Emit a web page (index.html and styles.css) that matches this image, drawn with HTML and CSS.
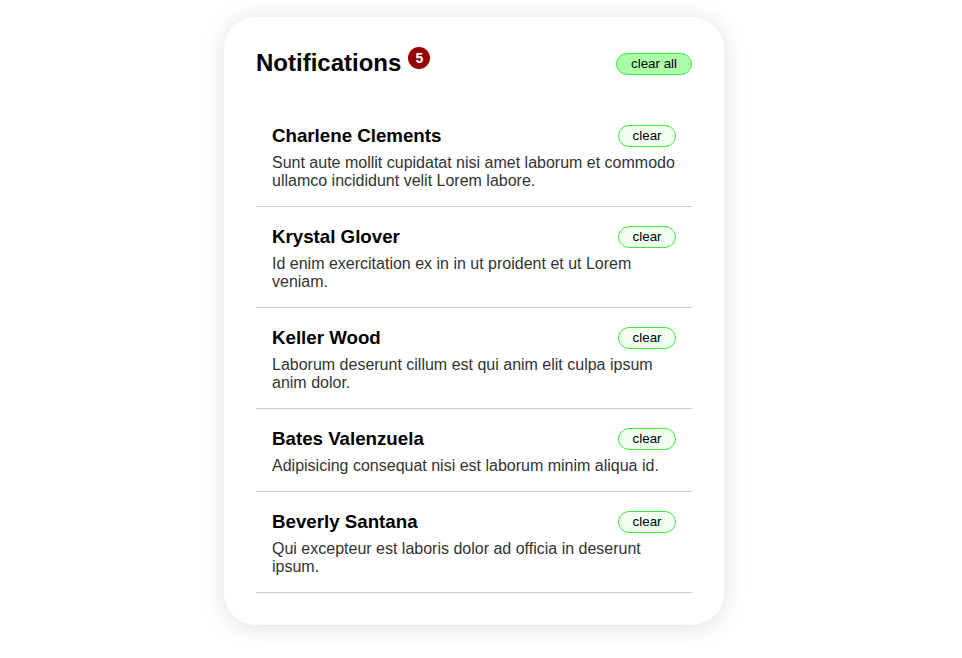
FILE: index.html
```html
<!DOCTYPE html>
<html lang="en">
<head>
<meta charset="utf-8">
<title>Notifications</title>
<link rel="stylesheet" href="styles.css">
</head>
<body>
<main class="page">
  <section class="card">
    <header class="card-header">
      <div class="title-wrap">
        <h2 class="title">Notifications</h2>
        <span class="badge">5</span>
      </div>
      <button class="btn btn-all">clear all</button>
    </header>
    <ul class="list">
      <li class="item">
        <div class="item-head">
          <h3 class="name">Charlene Clements</h3>
          <button class="btn btn-clear">clear</button>
        </div>
        <p class="desc">Sunt aute mollit cupidatat nisi amet laborum et commodo ullamco incididunt velit Lorem labore.</p>
      </li>
      <li class="item">
        <div class="item-head">
          <h3 class="name">Krystal Glover</h3>
          <button class="btn btn-clear">clear</button>
        </div>
        <p class="desc">Id enim exercitation ex in in ut proident et ut Lorem veniam.</p>
      </li>
      <li class="item">
        <div class="item-head">
          <h3 class="name">Keller Wood</h3>
          <button class="btn btn-clear">clear</button>
        </div>
        <p class="desc">Laborum deserunt cillum est qui anim elit culpa ipsum anim dolor.</p>
      </li>
      <li class="item">
        <div class="item-head">
          <h3 class="name">Bates Valenzuela</h3>
          <button class="btn btn-clear">clear</button>
        </div>
        <p class="desc">Adipisicing consequat nisi est laborum minim aliqua id.</p>
      </li>
      <li class="item">
        <div class="item-head">
          <h3 class="name">Beverly Santana</h3>
          <button class="btn btn-clear">clear</button>
        </div>
        <p class="desc">Qui excepteur est laboris dolor ad officia in deserunt ipsum.</p>
      </li>
    </ul>
  </section>
</main>
</body>
</html>
```

FILE: styles.css
```css
* { box-sizing: border-box; }

html, body {
  margin: 0;
  padding: 0;
  background: #ffffff;
  font-family: "Liberation Sans", Arial, sans-serif;
}

.page {
  display: flex;
  justify-content: center;
  align-items: flex-start;
  padding: 17px 14px 34px 0;
}

.card {
  width: 500px;
  background: #ffffff;
  border-radius: 32px;
  padding: 32px 32px 32px;
  box-shadow: 0 2px 24px rgba(0, 0, 0, 0.13);
}

.card-header {
  display: flex;
  justify-content: space-between;
  align-items: center;
  height: 28px;
  margin-bottom: 29px;
}

.title-wrap {
  display: flex;
  align-items: flex-start;
  gap: 7px;
  height: 28px;
}

.title {
  margin: 0;
  font-size: 24px;
  line-height: 28px;
  font-weight: bold;
  color: #000000;
}

.badge {
  display: flex;
  align-items: center;
  justify-content: center;
  width: 22px;
  height: 22px;
  margin-top: -2px;
  border-radius: 50%;
  background: #990000;
  color: #ffffff;
  font-size: 14px;
  font-weight: bold;
  line-height: 1;
}

.btn {
  height: 22px;
  padding: 0 14px;
  border-radius: 11px;
  border: 1px solid #3ee83e;
  font-family: "Liberation Sans", Arial, sans-serif;
  font-size: 13.333px;
  line-height: 20px;
  color: #000000;
  cursor: pointer;
}

.btn-all {
  background: #aaffaa;
  margin-top: 2px;
}

.btn-clear {
  background: #f0fff0;
  padding: 0 13.5px;
}

.list {
  list-style: none;
  margin: 0;
  padding: 0;
}

.item {
  padding: 19px 16px 16px;
  border-bottom: 1px solid #cccccc;
}

.item-head {
  display: flex;
  justify-content: space-between;
  align-items: center;
  height: 22px;
}

.name {
  margin: 0;
  font-size: 18.72px;
  line-height: 22px;
  font-weight: bold;
  color: #000000;
}

.desc {
  margin: 7px 0 0;
  font-size: 16px;
  line-height: 18px;
  color: #333333;
}
```
